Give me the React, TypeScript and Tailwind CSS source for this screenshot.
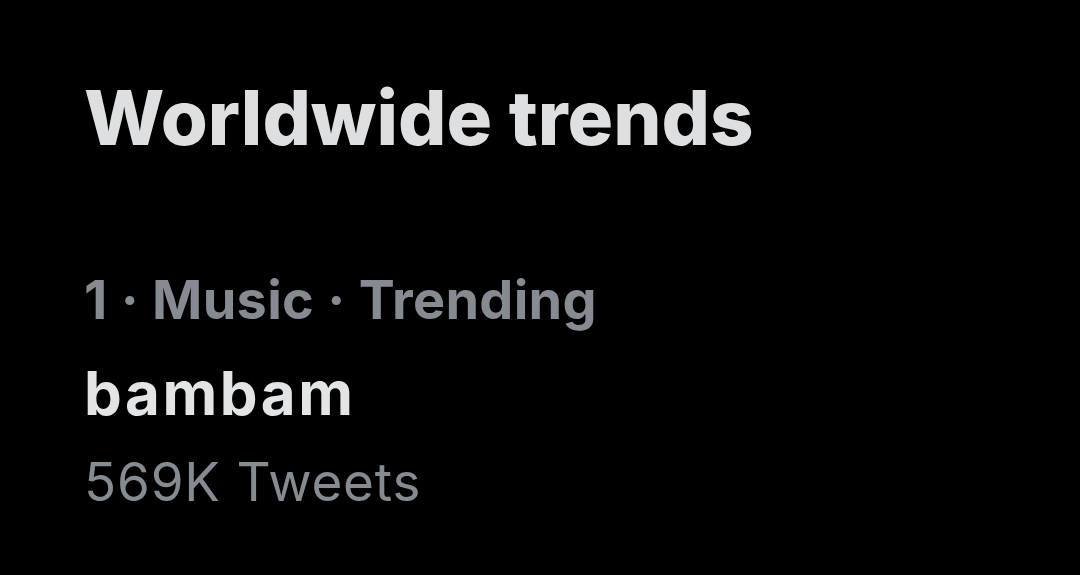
export default function App() {
  return (
    <div
      className="w-[1080px] h-[575px] bg-black overflow-hidden pl-[84px] pt-[79px]"
      style={{ fontFamily: "Inter, 'Liberation Sans', sans-serif" }}
    >
      <h1 className="text-[76px] leading-none font-extrabold text-[#dedfe0] tracking-[0px]">
        Worldwide trends
      </h1>
      <div className="mt-[114px] flex flex-col">
        <p className="text-[54px] leading-[62px] font-bold text-[#868a91] tracking-[0.3px]">
          1 · Music · Trending
        </p>
        <p className="mt-[27px] text-[60px] leading-[70px] font-bold text-[#e3e4e5] tracking-[2.6px]">
          bambam
        </p>
        <p className="mt-[23px] text-[53px] leading-[62px] text-[#868a91] tracking-[0.8px]">
          569K Tweets
        </p>
      </div>
    </div>
  );
}
